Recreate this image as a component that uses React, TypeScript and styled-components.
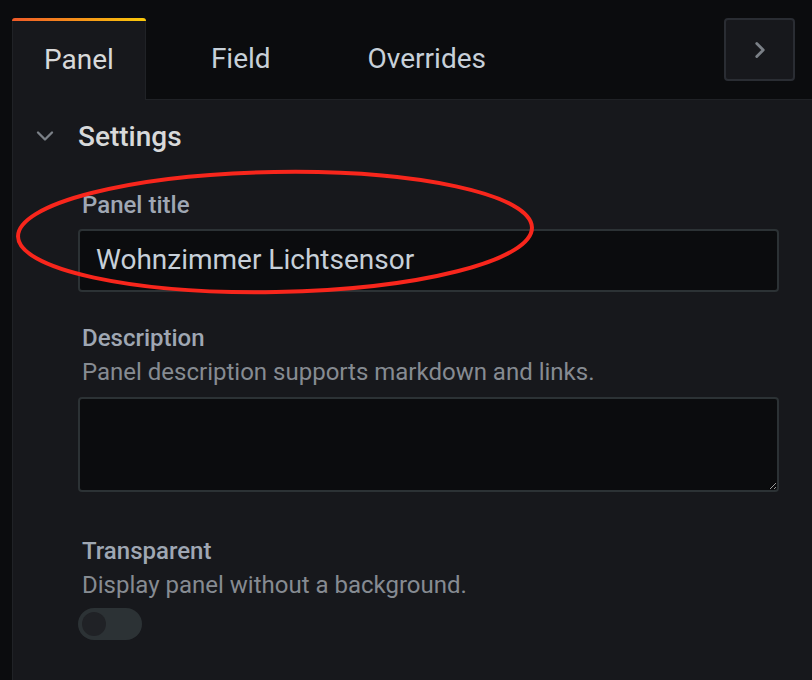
import styled, { createGlobalStyle } from "styled-components";
import { ChevronDown, ChevronRight } from "lucide-react";

const GlobalStyle = createGlobalStyle`
  body {
    margin: 0;
    background: #0b0c0e;
    font-family: Roboto, "Liberation Sans", sans-serif;
  }
`;

const Page = styled.div`
  position: relative;
  display: flex;
  flex-direction: column;
  height: 680px;
  padding: 18px 0 0 12px;
  box-sizing: border-box;
  overflow: hidden;
`;

const TabBar = styled.div`
  display: flex;
  align-items: flex-start;
  height: 81px;
  border-bottom: 1px solid #202226;
`;

const Tab = styled.div<{ $active?: boolean }>`
  position: relative;
  display: flex;
  align-items: center;
  box-sizing: border-box;
  height: ${(p) => (p.$active ? "82px" : "81px")};
  margin-right: 33px;
  padding: 0 31px;
  font-size: 28px;
  color: ${(p) => (p.$active ? "#d8d9da" : "#c7d0d9")};
  background: ${(p) => (p.$active ? "#17181c" : "transparent")};
  border-left: 1px solid ${(p) => (p.$active ? "#202226" : "transparent")};
  border-right: 1px solid ${(p) => (p.$active ? "#202226" : "transparent")};
  border-radius: 4px 4px 0 0;

  &::before {
    content: "";
    display: ${(p) => (p.$active ? "block" : "none")};
    position: absolute;
    top: 0;
    left: -1px;
    right: -1px;
    height: 3px;
    border-radius: 3px 3px 0 0;
    background: linear-gradient(90deg, #f05a28, #fbca0a);
  }
`;

const CollapseButton = styled.button`
  display: flex;
  align-items: center;
  justify-content: center;
  width: 71px;
  height: 63px;
  margin-left: auto;
  margin-right: 17px;
  padding: 0;
  background: #17181c;
  border: 2px solid #2a2d33;
  border-radius: 4px;
  color: #7b8087;
`;

const Content = styled.div`
  flex: 1;
  background: #17181c;
  border-left: 1px solid #202226;
  padding: 18px 33px 0 18px;
`;

const SectionHeader = styled.div`
  display: flex;
  align-items: center;
  gap: 19px;
  height: 36px;
  font-size: 28px;
  font-weight: 500;
  color: #d8d9da;

  svg {
    color: #7b8087;
  }
`;

const SectionBody = styled.div`
  padding: 35px 0 0 47px;
`;

const Field = styled.div<{ $spacing: number }>`
  display: flex;
  flex-direction: column;
  margin-bottom: ${(p) => p.$spacing}px;
`;

const Label = styled.div`
  padding-left: 4px;
  font-size: 24px;
  font-weight: 500;
  line-height: 32px;
  color: #9fa7b3;
`;

const Description = styled.div`
  padding-left: 4px;
  margin-top: 2px;
  font-size: 24px;
  line-height: 32px;
  color: #868b92;
`;

const TextInput = styled.input`
  box-sizing: border-box;
  width: 701px;
  height: 63px;
  margin-top: 8px;
  padding: 0 16px 2px;
  font-family: inherit;
  font-size: 28px;
  color: #c7d0d9;
  background: #0b0c0e;
  border: 2px solid #2c3235;
  border-radius: 4px;
  outline: none;
`;

const TextArea = styled.textarea`
  display: block;
  box-sizing: border-box;
  width: 701px;
  height: 95px;
  margin-top: 9px;
  padding: 12px 16px;
  font-family: inherit;
  font-size: 28px;
  color: #c7d0d9;
  background: #0b0c0e;
  border: 2px solid #2c3235;
  border-radius: 4px;
  outline: none;
  color-scheme: dark;
`;

const Toggle = styled.div<{ $on?: boolean }>`
  display: flex;
  align-items: center;
  box-sizing: border-box;
  width: 64px;
  height: 32px;
  margin-top: 7px;
  padding: 0 4px;
  background: #2c3235;
  border-radius: 16px;

  &::after {
    content: "";
    width: 24px;
    height: 24px;
    border-radius: 50%;
    background: #202226;
    margin-left: ${(p) => (p.$on ? "auto" : "0")};
  }
`;

const Annotation = styled.svg`
  position: absolute;
  top: 0;
  left: 0;
  pointer-events: none;
`;

export default function App() {
  return (
    <Page>
      <GlobalStyle />
      <TabBar>
        <Tab $active>Panel</Tab>
        <Tab>Field</Tab>
        <Tab>Overrides</Tab>
        <CollapseButton aria-label="Collapse">
          <ChevronRight size={26} strokeWidth={2.6} />
        </CollapseButton>
      </TabBar>
      <Content>
        <SectionHeader>
          <ChevronDown size={28} strokeWidth={2} />
          Settings
        </SectionHeader>
        <SectionBody>
          <Field $spacing={30}>
            <Label>Panel title</Label>
            <TextInput defaultValue="Wohnzimmer Lichtsensor" />
          </Field>
          <Field $spacing={43}>
            <Label>Description</Label>
            <Description>Panel description supports markdown and links.</Description>
            <TextArea />
          </Field>
          <Field $spacing={0}>
            <Label>Transparent</Label>
            <Description>Display panel without a background.</Description>
            <Toggle />
          </Field>
        </SectionBody>
      </Content>
      <Annotation width="812" height="680" viewBox="0 0 812 680">
        <ellipse
          cx="275"
          cy="232"
          rx="257"
          ry="60"
          fill="none"
          stroke="#f8261c"
          strokeWidth="4"
          transform="rotate(-1 275 232)"
        />
      </Annotation>
    </Page>
  );
}
